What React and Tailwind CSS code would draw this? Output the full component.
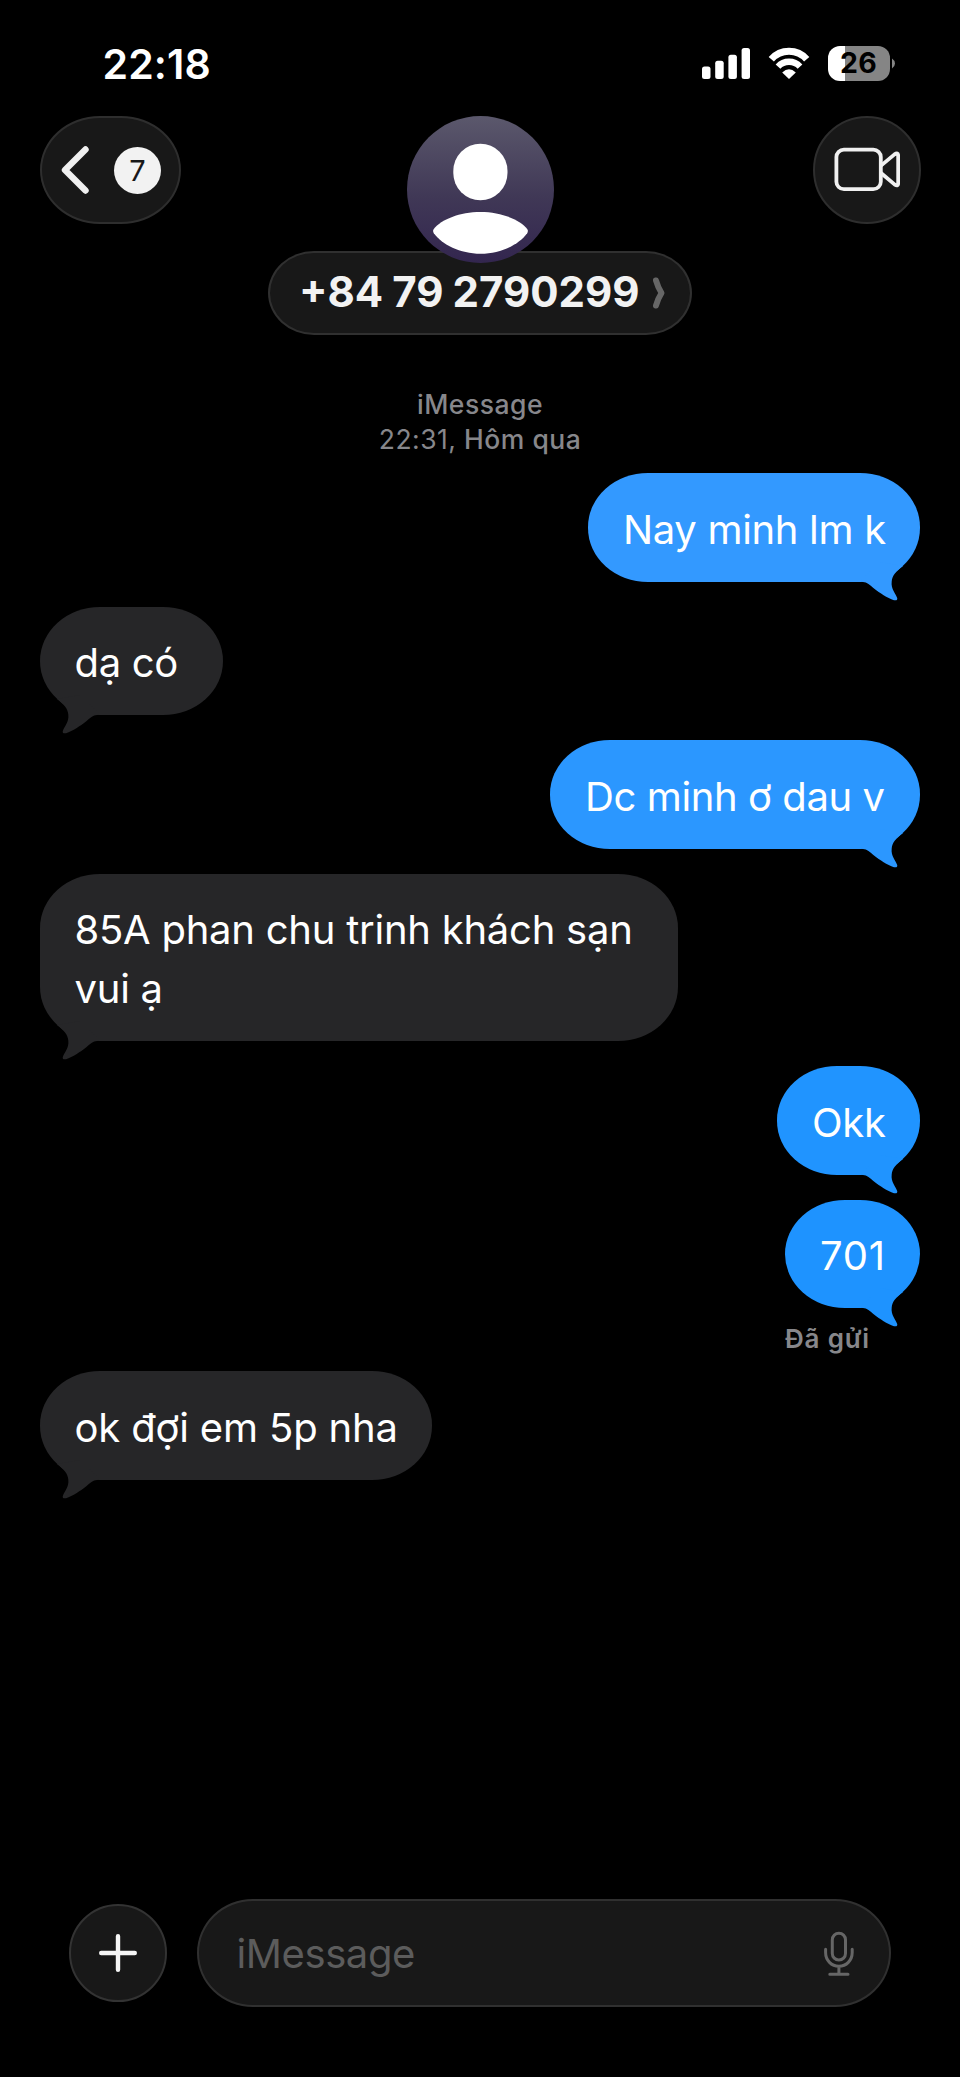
import React from "react";

const messages = [
  { id: 1, me: true, lines: ["Nay minh lm k"], size: "w-[332px] tracking-[-0.32px]", color: "bg-[#3399ff] text-[#3399ff]" },
  { id: 2, me: false, lines: ["dạ có"], size: "w-[183px] tracking-[-0.3px]", color: "bg-[#262628] text-[#262628]" },
  { id: 3, me: true, lines: ["Dc minh ơ dau v"], size: "w-[370px] tracking-[-0.4px]", color: "bg-[#2b97ff] text-[#2b97ff]" },
  { id: 4, me: false, lines: ["85A phan chu trinh khách sạn", "vui ạ"], size: "w-[638px] tracking-[-0.24px]", color: "bg-[#262628] text-[#262628]" },
  { id: 5, me: true, lines: ["Okk"], size: "w-[143px] tracking-[-0.3px]", color: "bg-[#2094ff] text-[#2094ff]" },
  { id: 6, me: true, lines: ["701"], size: "w-[135px] tracking-[0.8px]", color: "bg-[#1e93ff] text-[#1e93ff]", status: "Đã gửi" },
  { id: 7, me: false, lines: ["ok đợi em 5p nha"], size: "w-[392px] tracking-[-0.16px]", color: "bg-[#262628] text-[#262628]" },
];

function StatusBar() {
  return (
    <div className="h-[116px] flex-shrink-0 flex justify-between pl-[102.5px] pr-[65px]">
      <div className="pt-[39px] text-[41px] leading-[50px] font-semibold text-white tracking-[0.1px]">22:18</div>
      <div className="flex items-start pt-[46px]">
        {/* Signal */}
        <svg viewBox="0 0 48 35" className="w-12 h-[35px] mr-[18px]" fill="#fff">
          <rect x="0" y="20.5" width="8.5" height="12.5" rx="2.5" />
          <rect x="13.2" y="14.7" width="8.5" height="18.3" rx="2.5" />
          <rect x="26.4" y="8.7" width="8.5" height="24.3" rx="2.5" />
          <rect x="39.6" y="2" width="8.4" height="31" rx="2.5" />
        </svg>
        {/* Wifi */}
        <svg viewBox="0 0 42 35" className="w-[42px] h-[35px] mr-[18px]" fill="none" stroke="#fff">
          <path d="M3.3 13.2A23.6 23.6 0 0 1 38.7 13.2" strokeWidth="7" />
          <path d="M10 20.6A15 15 0 0 1 32 20.6" strokeWidth="6.4" />
          <path d="M21 32.9L14.2 26.4Q21 20 27.8 26.4Z" fill="#fff" stroke="none" />
        </svg>
        {/* Battery */}
        <div className="w-[62px] h-[35px] rounded-[12px] flex items-center bg-[linear-gradient(90deg,#fff_17px,#858585_17px)] pl-3">
          <span className="text-[28.5px] leading-none font-bold text-black tracking-[0.4px]">26</span>
        </div>
        <svg viewBox="0 0 5 35" className="w-[5px] h-[35px]" fill="#858585">
          <path d="M2 12.5Q5 14.5 5 17.5T2 22.5Z" />
        </svg>
      </div>
    </div>
  );
}

function Header() {
  return (
    <div className="grid grid-cols-[1fr_424px_1fr] items-start px-[39.5px] flex-shrink-0">
      <button className="w-[141px] h-[108px] rounded-[60px/54px] border-2 border-[#2e2e2e] bg-[#181818] flex items-center">
        <svg viewBox="0 0 30 50" className="w-[30px] h-[50px] ml-[19.5px]" fill="none" stroke="#f0f0f0" strokeWidth="6.4" strokeLinecap="round" strokeLinejoin="round">
          <path d="M24.5 4.5L4 25L24.5 45.5" />
        </svg>
        <span className="w-[47px] h-[47px] rounded-full bg-[#f2f2f2] text-[#181818] text-[29px] leading-[47px] text-center ml-[23px]">
          7
        </span>
      </button>

      <div className="flex flex-col items-center">
        <svg viewBox="0 0 147 147" className="w-[147px] h-[147px] relative z-10">
          <defs>
            <linearGradient id="avatar" x1="0" y1="0" x2="0" y2="1">
              <stop offset="0" stopColor="#5b586c" />
              <stop offset="0.55" stopColor="#403856" />
              <stop offset="1" stopColor="#33264f" />
            </linearGradient>
          </defs>
          <circle cx="73.5" cy="73.5" r="73.5" fill="url(#avatar)" />
          <rect x="46.3" y="27.8" width="54.2" height="56.4" rx="27.1" fill="#fff" />
          <path
            d="M26.8 113C34 103.5 53 96 73.5 96S113 103.5 120.2 113Q121.6 115 120.2 117.3C112 128.5 94 137.8 73.5 137.8S35 128.5 26.8 117.3Q25.4 115 26.8 113Z"
            fill="#fff"
          />
        </svg>
        <div className="w-full h-[84px] -mt-3 rounded-[46px/42px] border-2 border-[#303030] bg-[#181818] flex items-center pl-[29px]">
          <span className="text-[42px] leading-none font-bold text-[#f2f2f2] [word-spacing:-1px] whitespace-nowrap -mt-0.5">
            +84 79 2790299
          </span>
          <svg viewBox="0 0 16 34" className="w-4 h-[34px] ml-[11px]" fill="none" stroke="#666" strokeWidth="6" strokeLinecap="round" strokeLinejoin="round">
            <path d="M5 4.5Q7 11.5 10.5 17Q7 22.5 5 29.5" />
          </svg>
        </div>
      </div>

      <button className="w-[108px] h-[108px] rounded-full border-2 border-[#2e2e2e] bg-[#181818] justify-self-end flex items-center justify-center">
        <svg viewBox="0 0 66 46" className="w-[66px] h-[46px]" fill="none" stroke="#f0f0f0" strokeWidth="3.8" strokeLinejoin="round">
          <rect x="2.4" y="2.6" width="44.4" height="39.6" rx="7.5" />
          <path d="M47 18.6L60.5 7.4Q64.2 5 64.2 9V36Q64.2 39.8 60.8 37.6L47 26" />
        </svg>
      </button>
    </div>
  );
}

function Bubble({ message }) {
  const { me, lines, size, color } = message;
  return (
    <div className={`relative pt-[26.5px] pb-[23px] pl-[35px] rounded-[60px/54px] ${size} ${color}`}>
      <div className="text-[40px] leading-[59px] text-white whitespace-nowrap">
        {lines.map((line) => (
          <div key={line}>{line}</div>
        ))}
      </div>
      {/* Tail */}
      <svg
        viewBox="0 0 60 40"
        className={`absolute -bottom-5 w-[60px] h-10 ${me ? "right-0" : "left-0 -scale-x-100"}`}
        fill="currentColor"
      >
        <path d="M3 20C7 20 10 23 14 26.5C20 31 27 36 34 38.2Q37.8 39 37.2 36C36 32 30.7 27 31.7 19.5C32.3 13 36 10 43 4L20 0L0 19Z" />
      </svg>
    </div>
  );
}

function Composer() {
  return (
    <div className="mt-auto mb-[70px] ml-[69px] flex items-center gap-[29.5px]">
      <button className="w-[98px] h-[98px] rounded-full border-2 border-[#333] bg-[#181818] flex items-center justify-center">
        <svg viewBox="0 0 38 38" className="w-[38px] h-[38px]" stroke="#f5f5f5" strokeWidth="4.4" strokeLinecap="round">
          <path d="M19 2.2V35.8M2.2 19H35.8" />
        </svg>
      </button>
      <div className="w-[694px] h-[108px] rounded-[56px/54px] border-2 border-[#303030] bg-[#181818] flex items-center justify-between pl-[38px] pr-[34px]">
        <span className="text-[40px] leading-[50px] text-[#5c5c5c] tracking-[-0.4px] mt-0.5">iMessage</span>
        <svg viewBox="0 0 32 46" className="w-8 h-[46px] mt-0.5" fill="none" stroke="#666" strokeWidth="3" strokeLinecap="round">
          <rect x="9.3" y="2.2" width="13.2" height="26.8" rx="6.6" />
          <path d="M2.6 18.2V21.5C2.6 29.5 8.5 35.2 15.9 35.2S29.2 29.5 29.2 21.5V18.2M15.9 35.2V43M6.8 43.2H25" />
        </svg>
      </div>
    </div>
  );
}

export default function App() {
  return (
    <div className="w-[960px] h-[2077px] bg-black font-['Inter',sans-serif] flex flex-col overflow-hidden">
      <StatusBar />
      <Header />

      <div className="mt-[52px] text-center text-[26.5px] leading-[35px] font-medium text-[#87878b] tracking-[0.5px]">
        <div>iMessage</div>
        <div>
          <span className="font-normal">22:31,</span> Hôm qua
        </div>
      </div>

      {/* Conversation */}
      <div className="mt-[16.25px] flex flex-col gap-[25px] pl-[39.5px] pr-10">
        {messages.map((message) => (
          <div key={message.id} className={message.me ? "self-end" : "self-start"}>
            <Bubble message={message} />
            {message.status && (
              <div className="mt-4 h-[22px] text-[26px] leading-[30px] font-semibold text-[#87878b] tracking-[0.8px] whitespace-nowrap">
                {message.status}
              </div>
            )}
          </div>
        ))}
      </div>

      <Composer />
    </div>
  );
}
